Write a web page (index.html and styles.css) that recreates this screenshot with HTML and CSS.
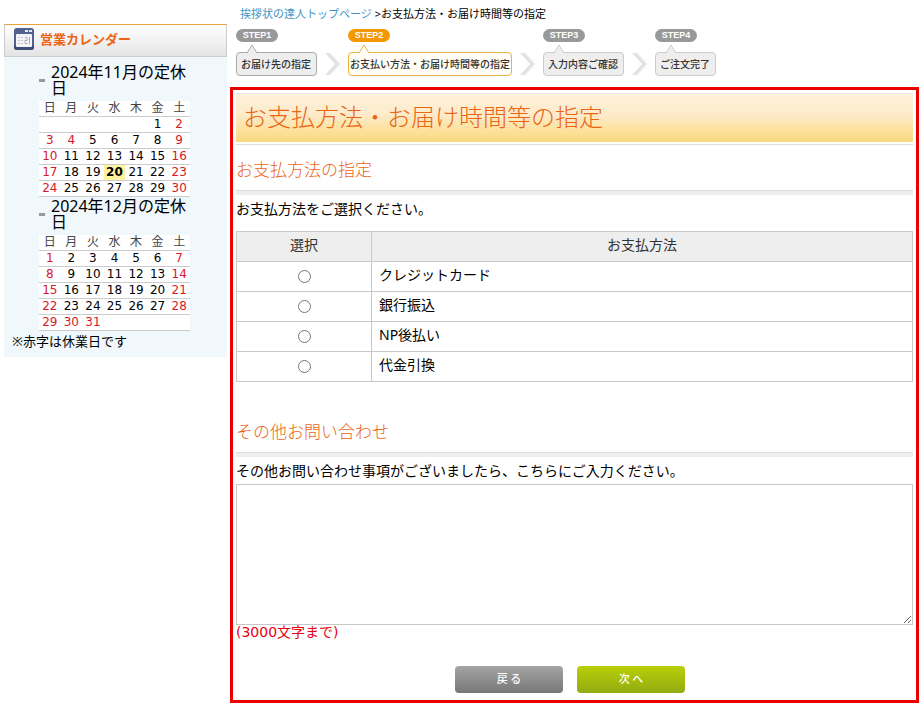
FILE: index.html
```html
<!DOCTYPE html>
<html lang="ja">
<head>
<meta charset="utf-8">
<title>お支払方法・お届け時間等の指定</title>
<link rel="stylesheet" href="styles.css">
</head>
<body>
<div class="page">
  <aside class="sidebar">
    <h2 class="sidebar-title">
      <svg class="sidebar-icon" width="20" height="22" viewBox="0 0 20 22" aria-hidden="true">
        <rect x="0" y="0" width="20" height="22" rx="3" fill="#53628f"/>
        <path d="M0 19v-1.500h20V19a3 3 0 0 1-3 3H3a3 3 0 0 1-3-3z" fill="#3f4d78"/>
        <rect x="2" y="6" width="16" height="13" rx="1" fill="#f3f4f8"/>
        <rect x="11" y="2" width="3" height="2" fill="#e4e8f4"/>
        <rect x="15" y="2" width="3" height="2" fill="#e4e8f4"/>
        <path d="M4 9.500h5M4 12.500h5M4 15.500h5" stroke="#c3c6cf" stroke-dasharray="2 1"/>
        <path d="M11 9.500h2v3h-2v3h2.500M15.500 9v7" stroke="#a9adba" fill="none"/>
      </svg>
      <span>営業カレンダー</span>
    </h2>
    <div class="calendars">
      <section class="month">
        <h3>2024年11月の定休日</h3>
        <table class="cal">
          <thead><tr><th>日</th><th>月</th><th>火</th><th>水</th><th>木</th><th>金</th><th>土</th></tr></thead>
          <tbody>
            <tr><td></td><td></td><td></td><td></td><td></td><td>1</td><td class="off">2</td></tr>
            <tr><td class="off">3</td><td class="off">4</td><td>5</td><td>6</td><td>7</td><td>8</td><td class="off">9</td></tr>
            <tr><td class="off">10</td><td>11</td><td>12</td><td>13</td><td>14</td><td>15</td><td class="off">16</td></tr>
            <tr><td class="off">17</td><td>18</td><td>19</td><td class="today">20</td><td>21</td><td>22</td><td class="off">23</td></tr>
            <tr><td class="off">24</td><td>25</td><td>26</td><td>27</td><td>28</td><td>29</td><td class="off">30</td></tr>
          </tbody>
        </table>
      </section>
      <section class="month">
        <h3>2024年12月の定休日</h3>
        <table class="cal">
          <thead><tr><th>日</th><th>月</th><th>火</th><th>水</th><th>木</th><th>金</th><th>土</th></tr></thead>
          <tbody>
            <tr><td class="off">1</td><td>2</td><td>3</td><td>4</td><td>5</td><td>6</td><td class="off">7</td></tr>
            <tr><td class="off">8</td><td>9</td><td>10</td><td>11</td><td>12</td><td>13</td><td class="off">14</td></tr>
            <tr><td class="off">15</td><td>16</td><td>17</td><td>18</td><td>19</td><td>20</td><td class="off">21</td></tr>
            <tr><td class="off">22</td><td>23</td><td>24</td><td>25</td><td>26</td><td>27</td><td class="off">28</td></tr>
            <tr><td class="off">29</td><td class="off">30</td><td class="off">31</td><td></td><td></td><td></td><td></td></tr>
          </tbody>
        </table>
      </section>
    </div>
    <p class="cal-note">※赤字は休業日です</p>
  </aside>

  <main class="main">
    <nav class="breadcrumb"><a href="#">挨拶状の達人トップページ</a> &gt;お支払方法・お届け時間等の指定</nav>

    <ol class="steps">
      <li class="step">
        <span class="pill">STEP1</span>
        <svg class="pointer" width="10" height="9" viewBox="0 0 10 9"><path d="M0 9L5 1l5 8"/></svg>
        <span class="label">お届け先の指定</span>
      </li>
      <li class="chevron"><svg width="15" height="22" viewBox="0 0 15 22"><path d="M0 0h5l10 11L5 22H0l10-11z"/></svg></li>
      <li class="step current">
        <span class="pill">STEP2</span>
        <svg class="pointer" width="10" height="9" viewBox="0 0 10 9"><path d="M0 9L5 1l5 8"/></svg>
        <span class="label">お支払い方法・お届け時間等の指定</span>
      </li>
      <li class="chevron"><svg width="15" height="22" viewBox="0 0 15 22"><path d="M0 0h5l10 11L5 22H0l10-11z"/></svg></li>
      <li class="step next">
        <span class="pill">STEP3</span>
        <svg class="pointer" width="10" height="9" viewBox="0 0 10 9"><path d="M0 9L5 1l5 8"/></svg>
        <span class="label">入力内容ご確認</span>
      </li>
      <li class="chevron"><svg width="15" height="22" viewBox="0 0 15 22"><path d="M0 0h5l10 11L5 22H0l10-11z"/></svg></li>
      <li class="step next">
        <span class="pill">STEP4</span>
        <svg class="pointer" width="10" height="9" viewBox="0 0 10 9"><path d="M0 9L5 1l5 8"/></svg>
        <span class="label">ご注文完了</span>
      </li>
    </ol>

    <form class="panel">
      <h1>お支払方法・お届け時間等の指定</h1>

      <h2>お支払方法の指定</h2>
      <p>お支払方法をご選択ください。</p>
      <table class="payment">
        <thead><tr><th class="pick">選択</th><th>お支払方法</th></tr></thead>
        <tbody>
          <tr><td class="pick"><input type="radio" name="pay" id="pay-card"></td><td><label for="pay-card">クレジットカード</label></td></tr>
          <tr><td class="pick"><input type="radio" name="pay" id="pay-bank"></td><td><label for="pay-bank">銀行振込</label></td></tr>
          <tr><td class="pick"><input type="radio" name="pay" id="pay-np"></td><td><label for="pay-np">NP後払い</label></td></tr>
          <tr><td class="pick"><input type="radio" name="pay" id="pay-cod"></td><td><label for="pay-cod">代金引換</label></td></tr>
        </tbody>
      </table>

      <h2>その他お問い合わせ</h2>
      <p><label for="message">その他お問い合わせ事項がございましたら、こちらにご入力ください。</label></p>
      <textarea id="message" maxlength="3000"></textarea>
      <div class="limit">(3000文字まで)</div>

      <div class="actions">
        <button type="button" class="back">戻 る</button>
        <button type="submit" class="go">次 へ</button>
      </div>
    </form>
  </main>
</div>
</body>
</html>
```

FILE: styles.css
```css
* { box-sizing: border-box; }

body {
  margin: 0;
  background: #fff;
  color: #000;
  font-family: "Noto Sans", "Noto Sans CJK JP", sans-serif;
  font-size: 14px;
  line-height: 20px;
}

h1, h2, h3, p, ol { margin: 0; padding: 0; font-weight: 400; }
ol { list-style: none; }
table { border-collapse: collapse; }

.page { display: flex; align-items: flex-start; padding-left: 4px; }

/* Sidebar calendar */
.sidebar {
  flex: 0 0 223px;
  margin-top: 24px;
  padding-bottom: 6px;
  background: #f0f8fc;
}
.sidebar-title {
  display: flex;
  align-items: center;
  gap: 6px;
  height: 33px;
  padding: 0 9px 3px;
  border: 1px solid #ccc;
  border-top-color: #e9a23b;
  background: linear-gradient(#fff, #e4e4e4);
  color: #eb6414;
  font-size: 13px;
  font-weight: 700;
}
.calendars { padding: 6px 37px 0 35px; }
.month h3 {
  display: flex;
  align-items: center;
  gap: 6px;
  height: 38px;
  padding-bottom: 4px;
  font-size: 16px;
  line-height: 16px;
}
.month h3::before {
  content: "";
  flex: 0 0 6px;
  height: 3px;
  background: #999;
}
.cal {
  width: 100%;
  table-layout: fixed;
  background: #fff;
  font-family: "DejaVu Sans", "Noto Sans CJK JP", sans-serif;
  font-size: 12px;
  line-height: 15px;
}
.cal tr { border-bottom: 1px solid #ccc; }
.cal th, .cal td { height: 15px; padding: 0; text-align: center; }
.cal th { color: #444; font-weight: 400; }
.cal .off { color: #d7182a; }
.cal .today { background: #fff3a0; font-weight: 700; }
.cal-note { padding-left: 8px; font-size: 13px; }

/* Main column */
.main { flex: 1; min-width: 0; margin-left: 3px; }
.breadcrumb {
  padding: 4px 0 0 10px;
  font-size: 11px;
}
.breadcrumb a { color: #3d94c4; text-decoration: none; }

.steps {
  display: flex;
  align-items: flex-end;
  gap: 8px;
  padding: 5px 0 11px 6px;
}
.step { display: flex; flex-direction: column; align-items: flex-start; }
.pill {
  width: 42px;
  height: 13px;
  border-radius: 7px;
  background: #999;
  color: #fff;
  font: 700 9px/13px "Liberation Sans", sans-serif;
  text-align: center;
}
.pointer {
  z-index: 1;
  margin: 2px 0 -1px 11px;
  fill: #eee;
  stroke: #aaa;
}
.label {
  height: 24px;
  padding: 0 5px 0 4px;
  border: 1px solid #aaa;
  border-radius: 4px;
  background: #eee;
  color: #333;
  font-size: 10px;
  font-weight: 500;
  line-height: 22px;
  white-space: nowrap;
}
.next .label { border-color: #ccc; }
.next .pointer { stroke: #ccc; }
.current .pill { background: #f39800; }
.current .label { padding: 0 1px; border-color: #e8b340; background: #fffdf5; }
.current .pointer { fill: #fffdf5; stroke: #e8b340; }
.chevron { height: 23px; }
.chevron svg { display: block; fill: #e3e3e3; }

.panel {
  padding: 3px 3px 7px;
  border: 3px solid #ea0000;
}
.panel h1 {
  height: 52px;
  padding-left: 7px;
  border-top: 1px solid #e8e8e8;
  border-bottom: 1px solid #ddd;
  background: linear-gradient(#fef1db, #fdebcb 40%, #fbe19a 75%, #f8d980 96%, #fff 97%);
  color: #eb6414;
  font-size: 24px;
  font-weight: 300;
  line-height: 46px;
}
.panel h2 {
  height: 50px;
  border-bottom: 4px solid #eee;
  box-shadow: inset 0 -1px #ddd;
  color: #eb6414;
  font-size: 17px;
  font-weight: 300;
  line-height: 50px;
}
.panel p { padding: 4px 0 3px; }

.payment { width: 100%; margin: 9px 0 25px; }
.payment th, .payment td {
  height: 30px;
  padding: 0 7px 3px;
  border: 1px solid #c8c8c8;
}
.payment th { background: #eee; color: #333; font-weight: 400; }
.payment .pick { width: 135px; padding-left: 0; padding-right: 0; text-align: center; }
.payment td.pick { padding-bottom: 0; }
.payment input { display: block; width: 13px; height: 13px; margin: 0 auto; }

.panel textarea {
  display: block;
  width: 100%;
  height: 141px;
  border: 1px solid #c8c8c8;
  background: #fff;
  font: inherit;
}
.limit {
  color: #e60012;
  font-family: "DejaVu Sans", "Noto Sans CJK JP", sans-serif;
  font-size: 14px;
  line-height: 14px;
}
.actions {
  display: flex;
  justify-content: center;
  gap: 14px;
  padding-top: 27px;
  padding-right: 9px;
}
.actions button {
  width: 108px;
  height: 27px;
  padding: 0 0 2px;
  border: 0;
  border-radius: 4px;
  color: #fff;
  font: 500 11px/25px "Noto Sans CJK JP", sans-serif;
}
.back { background: linear-gradient(#a5a5a5, #777); }
.go { background: linear-gradient(#b9cf08, #91ac12); }
```
